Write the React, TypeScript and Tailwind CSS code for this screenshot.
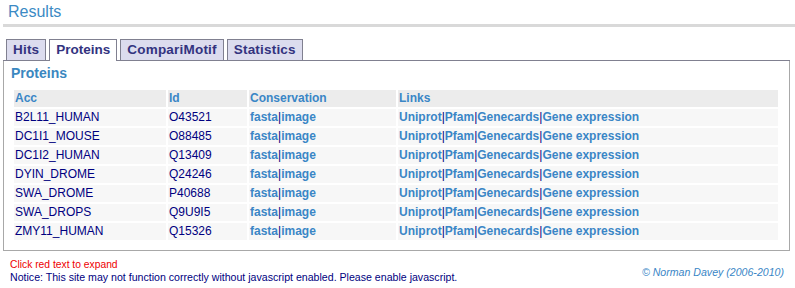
const ROWS = [
  { acc: "B2L11_HUMAN", id: "O43521" },
  { acc: "DC1I1_MOUSE", id: "O88485" },
  { acc: "DC1I2_HUMAN", id: "Q13409" },
  { acc: "DYIN_DROME", id: "Q24246" },
  { acc: "SWA_DROME", id: "P40688" },
  { acc: "SWA_DROPS", id: "Q9U9I5" },
  { acc: "ZMY11_HUMAN", id: "Q15326" },
];

const TABS = ["Hits", "Proteins", "CompariMotif", "Statistics"];
const LINKS = ["Uniprot", "Pfam", "Genecards", "Gene expression"];

function Sep() {
  return <span className="font-normal text-[#000080]">|</span>;
}

export default function App() {
  return (
    <div className="w-[795px] h-[288px] overflow-hidden bg-white font-['Liberation_Sans',Arial,sans-serif]">
      <div className="pl-[3px]">
        <h1 className="mt-[2px] pl-[5px] text-[16px] leading-[20px] text-[#3b8ac4]">
          Results
        </h1>
        <div className="mt-[2px] h-[3px] bg-[#d9d9d9]" />

        {/* tabs */}
        <div className="mt-[12px] w-[787px] flex items-end gap-[3px] pl-[3px] border-b border-[#808090]">
          {TABS.map((t) => {
            const active = t === "Proteins";
            return (
              <div
                key={t}
                className={
                  active
                    ? "relative -mb-px px-[6px] pt-[2px] pb-[3px] border border-b-0 border-[#808090] bg-white text-[13.5px] leading-[16px] font-bold text-[#33337f]"
                    : "px-[6px] pt-[2px] pb-[2px] border border-b-0 border-[#808090] bg-[#dcdcee] text-[13.5px] leading-[16px] font-bold text-[#33337f] tracking-[0.2px]"
                }
              >
                {t}
              </div>
            );
          })}
        </div>

        {/* panel */}
        <div className="w-[787px] border-x border-b border-[#a8a8a8] pt-[4px] pb-[8px]">
          <h2 className="pl-[7px] text-[14px] leading-[17px] font-bold text-[#3a87c0]">
            Proteins
          </h2>
          <table className="mt-[6px] ml-[8px] border-separate border-spacing-[2px] text-[12px] leading-[17px]">
            <thead>
              <tr className="bg-[#ececec] text-left font-bold text-[#3a86c6]">
                <th className="w-[152px] h-[17px] px-[1px] p-0">Acc</th>
                <th className="w-[79px] h-[17px] px-[1px] p-0">Id</th>
                <th className="w-[147px] h-[17px] px-[1px] p-0">Conservation</th>
                <th className="w-[380px] h-[17px] px-[1px] p-0">Links</th>
              </tr>
            </thead>
            <tbody>
              {ROWS.map((r) => (
                <tr key={r.acc} className="bg-[#f7f7f7]">
                  <td className="h-[17px] px-[1px] p-0 text-[#000080]">{r.acc}</td>
                  <td className="h-[17px] px-[1px] p-0 text-[#000080]">{r.id}</td>
                  <td className="h-[17px] px-[1px] p-0 font-bold text-[#3a86c6]">
                    fasta<Sep />image
                  </td>
                  <td className="h-[17px] px-[1px] p-0 font-bold text-[#3a86c6]">
                    {LINKS.map((l, i) => (
                      <span key={l}>
                        {i > 0 && <Sep />}
                        {l}
                      </span>
                    ))}
                  </td>
                </tr>
              ))}
            </tbody>
          </table>
        </div>

        {/* footer */}
        <div className="mt-[7px] flex justify-between pl-[7px] pr-[11px] text-[10.6px] leading-[13px]">
          <div>
            <div className="text-[#ee0000] text-[10.3px]">Click red text to expand</div>
            <div className="text-[#000080]">
              Notice: This site may not function correctly without javascript enabled. Please enable javascript.
            </div>
          </div>
          <div className="mt-[8px] italic text-[#3a86c6]">© Norman Davey (2006-2010)</div>
        </div>
      </div>
    </div>
  );
}
